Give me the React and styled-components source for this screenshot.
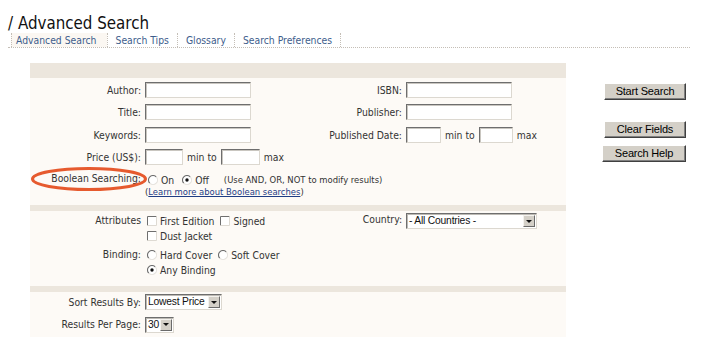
import React from 'react';
import styled, { createGlobalStyle } from 'styled-components';

const Global = createGlobalStyle`
  html, body { margin: 0; padding: 0; background: #fff; }
  body {
    font-family: "DejaVu Sans Condensed", "DejaVu Sans", sans-serif;
    font-stretch: semi-condensed;
    color: #333;
  }
`;

const Page = styled.div`
  width: 712px;
  height: 364px;
  overflow: hidden;
`;

const Title = styled.h1`
  margin: 0;
  padding: 12.5px 0 0 8px;
  font-weight: normal;
  font-size: 16.8px;
  line-height: 20px;
  color: #111;
`;

const TabBar = styled.nav`
  display: flex;
  margin: 0.5px 22px 0 8px;
  padding-left: 3px;
  border-bottom: 1px dotted #c4beb6;
  height: 14px;
`;

const Tab = styled.a`
  display: block;
  padding: ${(p) => (p.$first ? '0 10px 0 4px' : '0 8px')};
  border-left: 1px dotted #c4beb6;
  border-right: ${(p) => (p.$last ? '1px dotted #c4beb6' : 'none')};
  background: ${(p) => (p.$active ? '#fbf7f2' : 'transparent')};
  font-size: 10.3px;
  line-height: 14px;
  color: #3d5d8c;
  text-decoration: none;
`;

const Main = styled.div`
  display: flex;
  align-items: flex-start;
  margin-top: 15px;
  padding-left: 30px;
`;

const Panel = styled.div`
  width: 536px;
  display: flex;
  flex-direction: column;
`;

const Band = styled.div`
  height: ${(p) => p.$h}px;
  background: #ece6dd;
`;

const Section = styled.div`
  background: #fdfaf6;
  display: grid;
  grid-template-columns: 111px 151px 102px 1fr;
  column-gap: 4px;
  row-gap: ${(p) => p.$rowGap}px;
  grid-auto-rows: minmax(${(p) => p.$rowH}px, auto);
  padding: ${(p) => p.$pad};
`;

const Label = styled.div`
  grid-column: ${(p) => (p.$right ? 3 : 1)};
  justify-self: end;
  align-self: ${(p) => (p.$top ? 'start' : 'center')};
  position: relative;
  font-size: 10.3px;
  line-height: ${(p) => p.$lh || 16}px;
  white-space: nowrap;
  color: #333;
  margin-top: ${(p) => p.$mt || 0}px;
`;

const Field = styled.div`
  display: flex;
  align-items: center;
  gap: 4px;
  font-size: 10.3px;
  color: #333;
  white-space: nowrap;
`;

const TextInput = styled.input`
  box-sizing: border-box;
  width: ${(p) => p.$w}px;
  height: 16px;
  margin: 0;
  padding: 0 2px;
  background: #fff;
  border: 1px solid;
  border-color: #6e6e6e #dcd8d0 #dcd8d0 #6e6e6e;
  box-shadow: inset 1px 1px 0 #c9c6c0;
  outline: none;
`;

const Wide = styled.div`
  grid-column: 2 / 5;
  display: flex;
  flex-direction: column;
  padding-top: 2px;
`;

const Line = styled.div`
  display: flex;
  align-items: center;
  height: ${(p) => p.$h || 12}px;
  font-size: 10.3px;
  color: #333;
  white-space: nowrap;
`;

const Option = styled.label`
  display: inline-flex;
  align-items: center;
  gap: 3px;
  margin-left: ${(p) => p.$ml || 0}px;
`;

const Small = styled.span`
  font-size: 9.4px;
  margin-left: ${(p) => p.$ml || 0}px;
`;

const Link = styled.a`
  color: #1f3d85;
  text-decoration: underline;
`;

const Stack = styled.div`
  display: flex;
  flex-direction: column;
  padding-left: 2px;
`;

const Ring = styled.svg`
  position: absolute;
  right: -8px;
  top: -6px;
  pointer-events: none;
`;

const SelectBox = styled.div`
  box-sizing: border-box;
  width: ${(p) => p.$w}px;
  height: 16px;
  display: flex;
  align-items: stretch;
  background: #fff;
  border: 1px solid;
  border-color: #6e6e6e #dcd8d0 #dcd8d0 #6e6e6e;
  box-shadow: inset 1px 1px 0 #bdbab4;
  font-family: "Liberation Sans", Arial, sans-serif;
  font-size: 10.3px;
  letter-spacing: -0.2px;
  color: #111;
  align-self: ${(p) => (p.$top ? 'start' : 'center')};
`;

const SelectText = styled.span`
  flex: 1;
  padding-left: 2px;
  line-height: 14px;
  white-space: nowrap;
  overflow: hidden;
`;

const Arrow = styled.span`
  box-sizing: border-box;
  flex: none;
  width: 12px;
  margin: 1px 1px 1px 0;
  background: #d4d0c8;
  border: 1px solid;
  border-color: #f4f2ee #6a6a6a #6a6a6a #f4f2ee;
  display: flex;
  align-items: center;
  justify-content: center;
  &::after {
    content: '';
    border-left: 3px solid transparent;
    border-right: 3px solid transparent;
    border-top: 3px solid #111;
  }
`;

const ButtonColumn = styled.div`
  display: flex;
  flex-direction: column;
  align-items: flex-end;
  width: 84px;
  margin-left: 36px;
  padding-top: 20px;
`;

const Button = styled.button`
  box-sizing: border-box;
  width: ${(p) => p.$w || 82}px;
  height: 17px;
  margin: ${(p) => p.$mt || 0}px 0 0;
  padding: 0;
  background: #d4d0c8;
  border: 1px solid;
  border-color: #ffffff #404040 #404040 #ffffff;
  box-shadow: inset -1px -1px 0 #808080;
  font-family: "Liberation Sans", Arial, sans-serif;
  font-size: 11px;
  letter-spacing: -0.2px;
  color: #000;
  line-height: 15px;
`;

const Radio = ({ checked }) => (
  <svg width="10" height="10" viewBox="0 0 10 10">
    <circle cx="5" cy="5" r="4.4" fill="#fff" />
    <path d="M8.2 1.8 A4.5 4.5 0 0 0 1.8 8.2" fill="none" stroke="#6f6f6f" strokeWidth="1.1" />
    <path d="M8.2 1.8 A4.5 4.5 0 0 1 1.8 8.2" fill="none" stroke="#e6e3de" strokeWidth="1.1" />
    {checked && <circle cx="5" cy="5" r="1.7" fill="#111" />}
  </svg>
);

const Check = () => (
  <svg width="10" height="10" viewBox="0 0 10 10">
    <rect x="0.5" y="0.5" width="9" height="9" fill="#fff" />
    <path d="M0.5 9.5 V0.5 H9.5" fill="none" stroke="#6f6f6f" strokeWidth="1" />
    <path d="M9.5 0.5 V9.5 H0.5" fill="none" stroke="#dedad3" strokeWidth="1" />
  </svg>
);

export default function App() {
  return (
    <Page>
      <Global />
      <Title>/ Advanced Search</Title>
      <TabBar>
        <Tab $first $active>Advanced Search</Tab>
        <Tab>Search Tips</Tab>
        <Tab>Glossary</Tab>
        <Tab $last>Search Preferences</Tab>
      </TabBar>
      <Main>
        <Panel>
          <Band $h={15} />
          <Section $rowGap={6.5} $rowH={16} $pad="3.5px 0 7px">
            <Label>Author:</Label>
            <Field><TextInput $w={106} /></Field>
            <Label $right>ISBN:</Label>
            <Field><TextInput $w={106} /></Field>

            <Label>Title:</Label>
            <Field><TextInput $w={106} /></Field>
            <Label $right>Publisher:</Label>
            <Field><TextInput $w={106} /></Field>

            <Label>Keywords:</Label>
            <Field><TextInput $w={106} /></Field>
            <Label $right>Published Date:</Label>
            <Field>
              <TextInput $w={35} />
              <span>min to</span>
              <TextInput $w={34} />
              <span>max</span>
            </Field>

            <Label>Price (US$):</Label>
            <Field>
              <TextInput $w={38} />
              <span>min to</span>
              <TextInput $w={39} />
              <span>max</span>
            </Field>

            <Label $top $lh={12}>
              Boolean Searching:
              <Ring width="120" height="26" viewBox="0 0 120 26">
                <ellipse cx="60" cy="13" rx="56.5" ry="10.5" fill="none" stroke="#e65a2e" strokeWidth="3" />
              </Ring>
            </Label>
            <Wide>
              <Line>
                <Option $ml={3}><Radio /> On</Option>
                <Option $ml={8}><Radio checked /> Off</Option>
                <Small $ml={15}>(Use AND, OR, NOT to modify results)</Small>
              </Line>
              <Line>
                <Small>(<Link>Learn more about Boolean searches</Link>)</Small>
              </Line>
            </Wide>
          </Section>
          <Band $h={6} />
          <Section $rowGap={4} $rowH={15} $pad="2.5px 0 8.5px">
            <Label $top $lh={15}>Attributes</Label>
            <Stack>
              <Line $h={15}>
                <Option><Check /> First Edition</Option>
                <Option $ml={6}><Check /> Signed</Option>
              </Line>
              <Line $h={15}>
                <Option><Check /> Dust Jacket</Option>
              </Line>
            </Stack>
            <Label $right $top $lh={15} $mt={-1}>Country:</Label>
            <SelectBox $w={131} $top>
              <SelectText>- All Countries -</SelectText>
              <Arrow />
            </SelectBox>

            <Label $top $lh={15}>Binding:</Label>
            <Stack>
              <Line $h={15}>
                <Option><Radio /> Hard Cover</Option>
                <Option $ml={6}><Radio /> Soft Cover</Option>
              </Line>
              <Line $h={15}>
                <Option><Radio checked /> Any Binding</Option>
              </Line>
            </Stack>
          </Section>
          <Band $h={6} />
          <Section $rowGap={6.5} $rowH={15} $pad="2.5px 0 4px">
            <Label $lh={15}>Sort Results By:</Label>
            <Field>
              <SelectBox $w={77}>
                <SelectText>Lowest Price</SelectText>
                <Arrow />
              </SelectBox>
            </Field>
            <Label $lh={15}>Results Per Page:</Label>
            <Field>
              <SelectBox $w={29}>
                <SelectText>30</SelectText>
                <Arrow />
              </SelectBox>
            </Field>
          </Section>
        </Panel>
        <ButtonColumn>
          <Button>Start Search</Button>
          <Button $mt={21}>Clear Fields</Button>
          <Button $mt={7} $w={84}>Search Help</Button>
        </ButtonColumn>
      </Main>
    </Page>
  );
}
